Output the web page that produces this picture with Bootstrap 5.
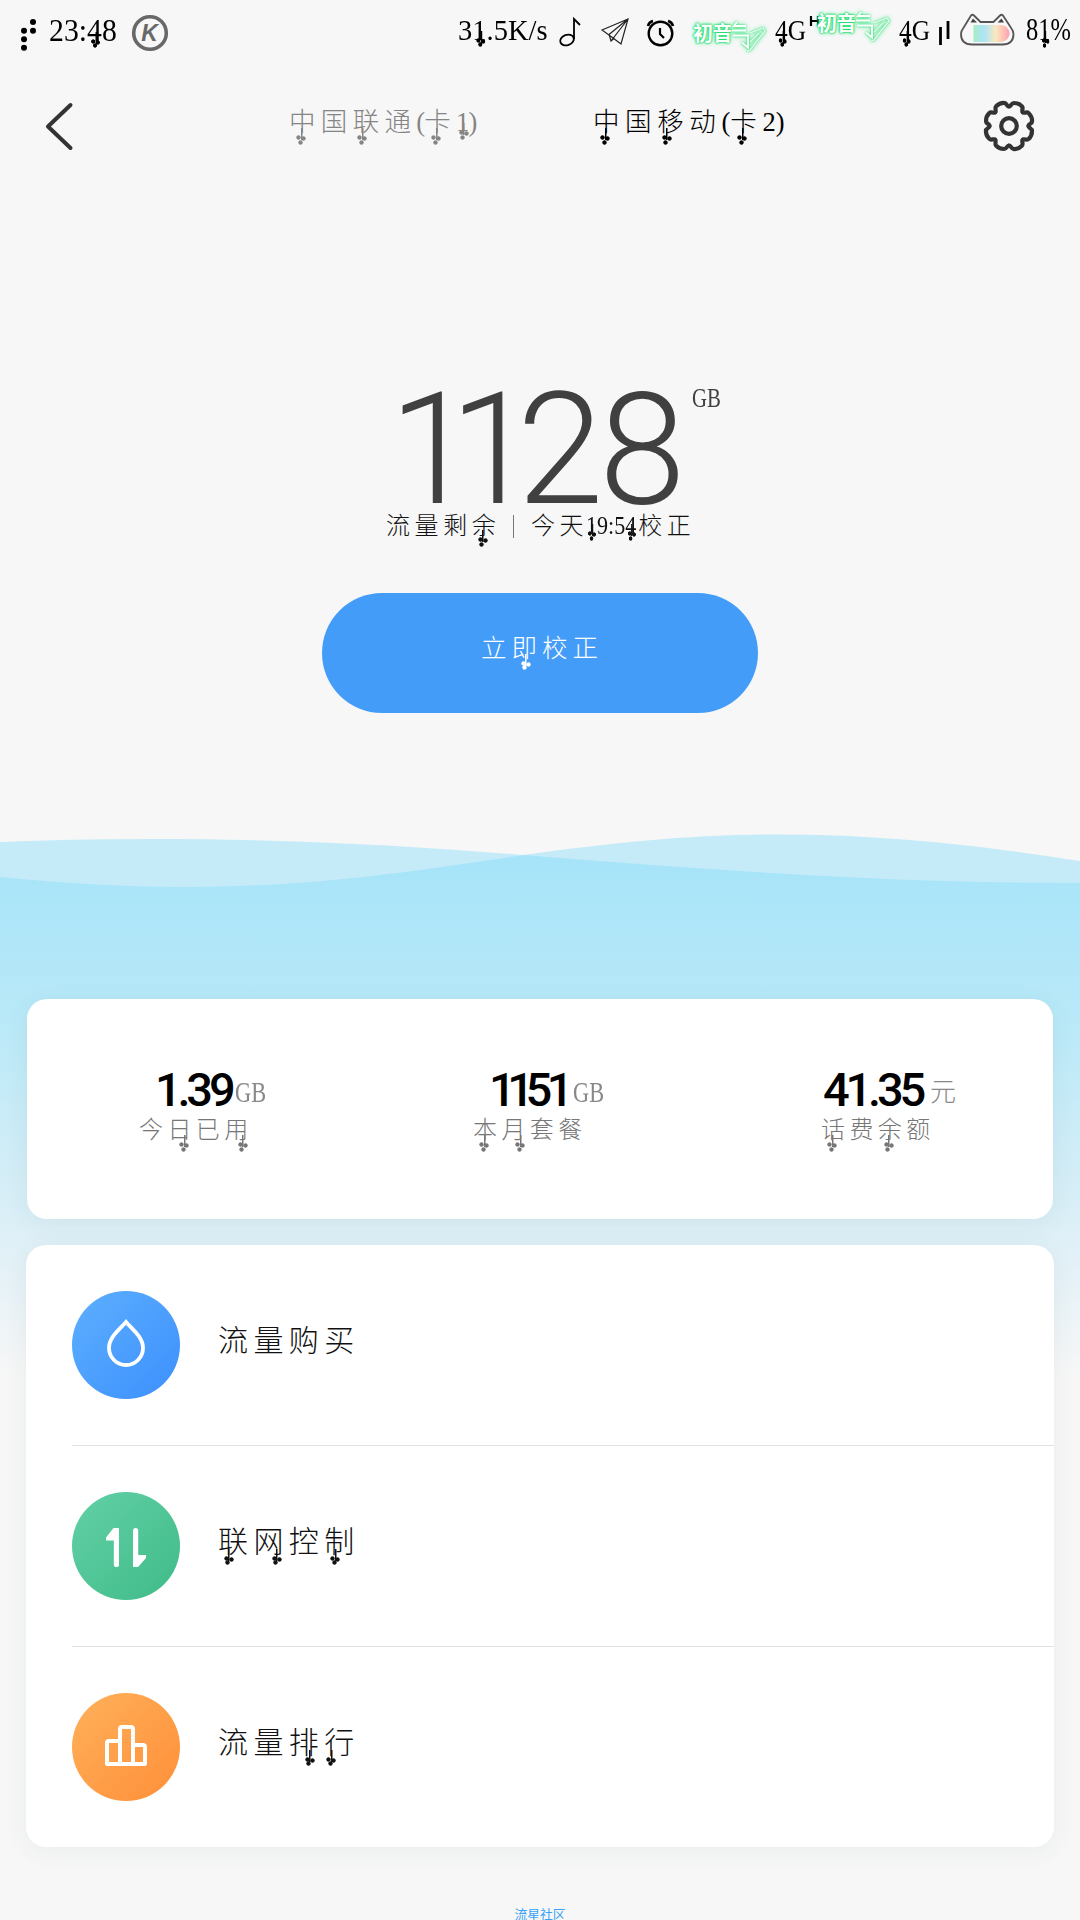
<!DOCTYPE html>
<html lang="zh-CN">
<head>
<meta charset="utf-8">
<meta name="viewport" content="width=device-width, initial-scale=1">
<title>流量</title>
<link href="https://cdn.jsdelivr.net/npm/bootstrap@5.3.0/dist/css/bootstrap.min.css" rel="stylesheet">
<style>
body{width:1080px;height:1920px;overflow:hidden;background:#f7f7f7;color:#000;font-family:"Liberation Serif","Noto Sans CJK SC",serif;font-weight:300}
svg{display:block;flex:none;overflow:visible}
.status{height:66px;padding-left:19px}
.st{flex:none;white-space:nowrap;line-height:36px;font-size:30px;transform-origin:0 50%}
.st-time{width:83px;font-size:32px;transform:scaleX(.93)}
.st-rate{width:102px;margin-left:290px;transform:scaleX(.95)}
.st-net{width:35px;margin-left:8px;transform:scaleX(.85)}
.st-bat{width:50px;font-size:31px;margin-left:1px;transform:scaleX(.79)}
/* hanging clover on the last stroke of some characters */
.cl{position:relative;display:inline-block;font-style:normal}
.cl::after{content:"";position:absolute;left:calc(var(--x,.46em) - 5px);top:var(--y,.92em);width:10px;height:17px;
background:radial-gradient(circle at 50% 50%,currentColor 50%,transparent 72%) 0 7px/5px 5px no-repeat,
radial-gradient(circle at 50% 50%,currentColor 50%,transparent 72%) 5px 8px/5px 5px no-repeat,
radial-gradient(circle at 50% 50%,currentColor 50%,transparent 72%) 1.5px 11.5px/5px 5px no-repeat,
linear-gradient(currentColor,currentColor) 4.5px 0/1.5px 12px no-repeat}
.cl-l{--x:.36em}.cl-r{--x:.7em}.cl-rr{--x:.78em}.cl-ll{--x:.23em}.cl-n{--x:.28em}
.st .cl,.cl-n{--y:.62em}
.st .cl{--x:.3em}
.sim .cl{--y:.99em}.sim .cl-n{--y:.8em}
.item .cl{--y:1em}
.miku{flex:none;position:relative;width:78px;height:32px;font:700 20px/25px "Noto Sans CJK SC",sans-serif;color:#fff;text-shadow:0 0 2px #19d968,0 0 2px #19d968,0 0 3px #3fe586,0 0 5px #7df0ad;padding-left:4px;margin-top:20px;letter-spacing:-.5px}
.miku-b{margin:10px 0 0 -6px}
.miku svg{position:absolute;left:0;top:0;filter:drop-shadow(0 0 1px #19d968) drop-shadow(0 0 2px #7df0ad)}
.topbar{height:120px;padding:0 45px}
.sim{font-size:26.5px;letter-spacing:5.3px;line-height:40px;margin-top:36px;white-space:nowrap}
.sim u{text-decoration:none;letter-spacing:0}
.sim-1{color:#858585;width:304px;margin-left:216px}
.sim-1 u{letter-spacing:-.8px}
.sim-2{width:390px;letter-spacing:5.6px}
.total{height:112px;margin:208px 0 0 389px;color:#404040}
.figure-num{font:300 156px/112px Roboto,sans-serif;height:112px;width:303px;white-space:nowrap}
.n1{letter-spacing:-26px}.n2{letter-spacing:-19px}.n3{letter-spacing:-4.5px}
.unit{display:inline-block;transform-origin:0 50%;transform:scaleX(.77);color:#888;font-size:29px;line-height:36px}
.stat-v .unit{position:relative;top:-4px}
.total .unit{color:#404040;font-size:27px;line-height:27px;margin-top:-9px}
.sub{height:36px;margin:2px 0 0 386px;font-size:24px;letter-spacing:4.6px;line-height:36px;color:#111;white-space:nowrap}
.sub-left{width:127px}
.bar-v{width:1px;height:23px;background:#777}
.sub-right{margin-left:17px}
.tm{letter-spacing:0;font-size:26px;display:inline-block;width:52px;margin-left:-2px;transform:scaleX(.85);transform-origin:0 50%}
.go{width:436px;height:120px;margin:49px auto 0;background:#449cf9;border-radius:60px;color:#fff;font-size:25.5px;letter-spacing:5px;padding:0 0 7px 4px;font-weight:300;border:0}
.go .cl{--x:.56em}
.sea{height:706px;margin:107px 0 -527px}
.sea>svg{position:absolute;left:0;top:0}
.panel{position:relative;background:#fff;border-radius:20px;box-shadow:0 4px 24px rgba(60,80,90,.07)}
.stats{margin:0 27px;height:220px;padding-top:68px}
.stat{flex:none;width:334px}
.stat-v{height:46px;white-space:nowrap}
.stat-v b{font:500 47px/46px Roboto,sans-serif;letter-spacing:-4.2px}
.stat-v .k1{letter-spacing:-8.5px}
.stat-v .k2{letter-spacing:-5.5px}
.stat-l{font-size:24px;letter-spacing:4.4px;line-height:34px;color:#777;white-space:nowrap}
.c1,.c2{padding-left:112px}.c1 .stat-v,.c2 .stat-v{padding-left:16px}
.c3{padding-left:126px}.c3 .stat-v{padding-left:2px}
.c1 .unit{margin-left:4px}.c2 .unit{margin-left:5px}
.unit.yuan{transform:none;font-size:26px;margin-left:8px;top:-5px}
.menu{margin:26px 26px 0;height:602px;padding-left:46px}
.item{height:201px;border-bottom:1px solid #e3e3e3;color:#111;font-size:30px;letter-spacing:5.4px}
.item:last-child{border:0;height:200px}
.item span{margin:-10px 0 0 38px}
.ring{flex:none;width:108px;height:108px}
.r-blue{background:linear-gradient(135deg,#5aacfe 10%,#3f93fd 90%)}
.r-green{background:linear-gradient(135deg,#5fcea3 10%,#43bd8b 90%)}
.r-orange{background:linear-gradient(135deg,#ffad57 10%,#ff923c 90%)}
.foot{height:12px;margin-top:60px;font:400 12.8px/13px "Noto Sans CJK SC",sans-serif;color:#38a2f8}
</style>
<script src="https://cdn.jsdelivr.net/npm/bootstrap@5.3.0/dist/js/bootstrap.bundle.min.js"></script>
</head>
<body class="d-flex flex-column">
<header class="status d-flex align-items-start flex-shrink-0">
  <svg width="30" height="66" viewBox="19 0 30 66"><circle cx="33" cy="22" r="3"/><circle cx="33" cy="30.700" r="3"/><circle cx="24" cy="30.700" r="3"/><circle cx="24" cy="39.300" r="3"/><circle cx="24" cy="47.800" r="3"/></svg>
  <span class="st st-time mt-2 pt-1">23:<i class="cl">4</i>8</span>
  <svg width="36" height="66" viewBox="132 0 36 66"><circle cx="150" cy="33" r="16.300" fill="none" stroke="#686868" stroke-width="3.600"/><text x="149.500" y="41" font-family="Liberation Sans" font-weight="700" font-style="italic" font-size="23" text-anchor="middle" fill="#686868">K</text></svg>
  <span class="st st-rate mt-2 pt-1">3<i class="cl">1</i>.5K/s</span>
  <svg width="129" height="66" viewBox="560 0 129 66" fill="none" stroke="#000">
    <path d="M574 39V19l6 6" stroke-width="1.800"/><ellipse cx="567" cy="40" rx="7" ry="5.200" transform="rotate(-20 567 40)" stroke-width="1.800"/>
    <path d="M602 30L628 19 621 44 613 38 602 30ZM628 19L609 34.500 611 41 628 19M611 41L614.500 38" stroke-width="1.200" stroke="#222"/>
    <circle cx="660.500" cy="33.500" r="11.800" stroke-width="2.400"/><path d="M660 28V34l4 4" stroke-width="2.200"/><path d="M648 26q1-4 5-5M673 26q-1-4-5-5" stroke-width="2.600"/>
  </svg>
  <span class="miku">初音<svg width="78" height="32" fill="none" stroke="#fff" stroke-width="1.900"><path d="M48 2l-3 4h12M43 10.500h14M44 15.500h15v12l-6-5"/><path d="M61 13l13-5 2 3L61 30l-3 1M61 22l9-9" stroke="#e6fbee" stroke-width="1.300"/></svg></span>
  <span class="st st-net mt-2 pt-1"><i class="cl">4</i>G</span>
  <svg width="9" height="66" viewBox="810 0 9 66"><path d="M811 16v10M818 16v10M811 21h7" stroke="#000" stroke-width="2.200"/></svg>
  <span class="miku miku-b">初音<svg width="78" height="32" fill="none" stroke="#fff" stroke-width="1.900"><path d="M48 2l-3 4h12M43 10.500h14M44 15.500h15v12l-6-5"/><path d="M61 13l13-5 2 3L61 30l-3 1M61 22l9-9" stroke="#e6fbee" stroke-width="1.300"/></svg></span>
  <span class="st st-net mt-2 pt-1"><i class="cl">4</i>G</span>
  <svg width="91" height="66" viewBox="934 0 91 66"><defs><linearGradient id="rb"><stop offset="0" stop-color="#a6ecc4"/><stop offset=".3" stop-color="#aee4f8"/><stop offset=".62" stop-color="#fbe9bd"/><stop offset="1" stop-color="#ff9fb0"/></linearGradient></defs>
    <path d="M940.500 27v18M948 21v18" stroke="#000" stroke-width="2.800"/>
    <path d="M973.500 25h28q8 2 8 8.500t-8 8.500h-28z" fill="url(#rb)"/>
    <path d="M971 15.500q1.500-1.500 3 0L980.500 22h13l6.500-6.500q1.500-1.500 3 0L1010.500 27q3 4 3 7 0 10.500-11 10.500H972q-11 0-11-10.500 0-3 3-7z" fill="none" stroke="#555" stroke-width="1.800"/>
    <path d="M970.500 22.500l2.500-4 4 4zM997.500 22.500l4-4 2.500 4z" fill="#444"/></svg>
  <span class="st st-bat mt-2 pt-1">8<i class="cl">1</i>%</span>
</header>

<nav class="topbar d-flex align-items-start flex-shrink-0">
  <svg width="28" height="120" viewBox="45 66 28 120"><path d="M70.500 105L48 126.500l22.500 21.500" fill="none" stroke="#333" stroke-width="4" stroke-linecap="round" stroke-linejoin="round"/></svg>
  <span class="sim sim-1"><i class="cl">中</i>国<i class="cl cl-l">联</i>通<u>(</u><i class="cl">卡</i><u><i class="cl cl-n">1</i>)</u></span>
  <span class="sim sim-2"><i class="cl">中</i>国<i class="cl cl-l">移</i>动<u>(</u><i class="cl">卡</i><u>2)</u></span>
  <svg width="52" height="120" viewBox="-26 -60 52 120" fill="none" stroke="#333" stroke-width="4.200" stroke-linecap="round"><defs><path id="tooth" d="M0-19.500C2.200-19.500 2.200-23 4.800-23Q10-23 12.900-19.700C14.900-17.800 12.100-15.500 13.800-13.800"/></defs>
  <use href="#tooth"/><use href="#tooth" transform="rotate(45)"/><use href="#tooth" transform="rotate(90)"/><use href="#tooth" transform="rotate(135)"/><use href="#tooth" transform="rotate(180)"/><use href="#tooth" transform="rotate(225)"/><use href="#tooth" transform="rotate(270)"/><use href="#tooth" transform="rotate(315)"/><circle r="7.800"/></svg>
</nav>

<section class="total d-flex align-items-start flex-shrink-0">
  <div class="figure-num"><span class="n1">1</span><span class="n2">1</span><span class="n3">2</span>8</div>
  <span class="unit">GB</span>
</section>
<div class="sub d-flex align-items-center flex-shrink-0"><span class="sub-left">流量剩<i class="cl">余</i></span><span class="bar-v"></span><span class="sub-right">今天<span class="tm"><i class="cl cl-n">1</i>9:5<i class="cl cl-n">4</i></span>校正</span></div>
<button class="go btn flex-shrink-0">立<i class="cl">即</i>校正</button>

<main class="sea position-relative flex-shrink-0">
  <svg width="1080" height="560" viewBox="0 820 1080 560"><defs><linearGradient id="sea" x1="0" y1="835" x2="0" y2="1375" gradientUnits="userSpaceOnUse"><stop offset="0" stop-color="#a4e3f9"/><stop offset=".34" stop-color="#b9e9f8"/><stop offset=".72" stop-color="#dceff7"/><stop offset="1" stop-color="#f7f7f7"/></linearGradient></defs>
  <path d="M0 842Q70 839 150 839C290 839 410 846 523 855 700 869 880 883 1080 883V900H0z" fill="#c6ebf8"/>
  <path d="M0 877Q100 887 185 887C310 887 410 872 523 855 620 842 690 834.500 780 834.500 890 834.500 990 847 1080 861V900H0z" fill="#c6ebf8"/>
  <path d="M0 877Q100 887 185 887C310 887 410 872 523 855 700 869 880 883 1080 883V1380H0z" fill="url(#sea)"/></svg>
</main>
<div class="flex-shrink-0">
  <section class="panel stats d-flex">
    <div class="stat c1"><div class="stat-v"><b>1.39</b><span class="unit">GB</span></div><div class="stat-l">今<i class="cl cl-r">日</i>已<i class="cl cl-rr">用</i></div></div>
    <div class="stat c2"><div class="stat-v"><b><span class="k1">11</span><span class="k2">51</span></b><span class="unit">GB</span></div><div class="stat-l"><i class="cl">本</i><i class="cl cl-rr">月</i>套餐</div></div>
    <div class="stat c3"><div class="stat-v"><b>41.35</b><span class="unit yuan">元</span></div><div class="stat-l"><i class="cl">话</i>费<i class="cl">余</i>额</div></div>
  </section>
  <section class="panel menu">
    <div class="item d-flex align-items-center"><div class="ring r-blue rounded-circle"><svg width="108" height="108" fill="none" stroke="#fff" stroke-width="3.800"><path d="M54 31C48 38 37 46 37 57a17 17 0 0 0 34 0C71 46 60 38 54 31z" stroke-linejoin="miter"/></svg></div><span>流量购买</span></div>
    <div class="item d-flex align-items-center"><div class="ring r-green rounded-circle"><svg width="108" height="108" fill="#fff"><path d="M41.500 36H47V72.500a2.600 2.600 0 0 1-5.200 0V48.500H34V45.500zM61 75V38.500a2.600 2.600 0 0 1 5.200 0V63H74v3l-8 9z"/></svg></div><span><i class="cl cl-l">联</i><i class="cl cl-rr">网</i>控<i class="cl cl-l">制</i></span></div>
    <div class="item d-flex align-items-center"><div class="ring r-orange rounded-circle"><svg width="108" height="108" fill="none" stroke="#fff" stroke-width="4" stroke-linejoin="round"><path d="M48 71V36q0-2 2-2h9q2 0 2 2v35M48 48H37q-2 0-2 2v21h38V54q0-2-2-2H61"/></svg></div><span>流量<i class="cl cl-r">排</i><i class="cl cl-ll">行</i></span></div>
  </section>
</div>
<footer class="foot text-center flex-shrink-0">流星社区</footer>
</body>
</html>
